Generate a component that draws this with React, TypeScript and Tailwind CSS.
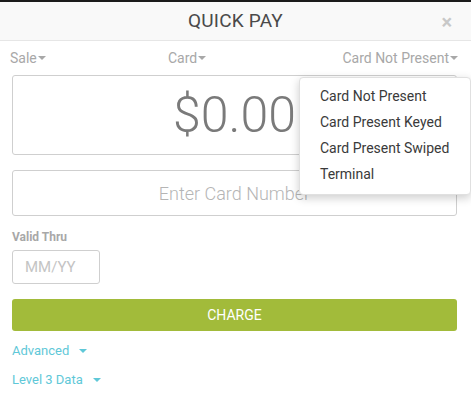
import React from 'react';

const Caret = ({ className = '' }: { className?: string }) => (
    <svg width="8" height="4" viewBox="0 0 8 4" className={className}>
        <path d="M0 0 L8 0 L4 4 Z" fill="currentColor" />
    </svg>
);

export default function App() {
    const modes = ['Card Not Present', 'Card Present Keyed', 'Card Present Swiped', 'Terminal'];

    return (
        <div className="w-[471px] h-[413px] bg-white relative overflow-hidden" style={{ fontFamily: 'Roboto, "Liberation Sans", sans-serif' }}>
            <div className="h-[2px] bg-[#1b1b1b]" />

            {/* Header */}
            <header className="h-[39px] bg-[#f9f9f9] border-b border-[#e6e6e6] flex items-center justify-center relative">
                <h1 className="text-[19px] text-[#4a4a4a] tracking-[0.2px]">QUICK PAY</h1>
                <span className="absolute right-[19px] top-[10px] text-[20px] font-bold text-[#c8c8c8] leading-none">×</span>
            </header>

            {/* Type selectors */}
            <div className="h-[34px] flex items-center justify-between pl-[10px] pr-[13px] text-[14px] text-[#a8a8a8]">
                <span className="flex items-center">Sale<Caret className="ml-px" /></span>
                <span className="flex items-center mr-[14px]">Card<Caret className="ml-px" /></span>
                <span className="flex items-center">Card Not Present<Caret className="ml-px" /></span>
            </div>

            <main className="pl-3 pr-[14px] flex flex-col">
                <div className="h-[80px] border border-[#cfcfcf] rounded-[3px] flex items-center justify-center">
                    <span className="text-[50px] font-light text-[#7a7a7a] leading-none">$0.00</span>
                </div>

                <div className="mt-[15px] h-[46px] border border-[#cfcfcf] rounded-[3px] flex items-center justify-center">
                    <span className="text-[18px] font-light text-[#b5b5b5]">Enter Card Number</span>
                </div>

                <label className="mt-[13px] text-[12px] font-bold text-[#a8a8a8] leading-[16px]">Valid Thru</label>
                <div className="mt-[5px] w-[88px] h-[34px] border border-[#cfcfcf] rounded-[3px] flex items-center pl-3">
                    <span className="text-[15px] text-[#c4c4c4]">MM/YY</span>
                </div>

                <button className="mt-[15px] h-[32px] rounded-[3px] bg-[#a2bb3a] text-white text-[14px] flex items-center justify-center">
                    CHARGE
                </button>

                <div className="mt-[12px] flex items-center text-[13px] text-[#5fc8d8] leading-[16px]">
                    Advanced<Caret className="ml-[10px]" />
                </div>
                <div className="mt-[13px] flex items-center text-[13px] text-[#5fc8d8] leading-[16px]">
                    Level 3 Data<Caret className="ml-[10px]" />
                </div>
            </main>

            {/* Open dropdown menu */}
            <ul className="absolute left-[299px] top-[77px] w-[172px] bg-white rounded-[4px] shadow-[0_3px_10px_rgba(0,0,0,0.2)] border border-[#e0e0e0] pt-[5px] pb-[7px] text-[14px] text-[#3a3a3a]">
                {modes.map(m => (
                    <li key={m} className="h-[26px] flex items-center pl-[20px]">{m}</li>
                ))}
            </ul>
        </div>
    );
}
